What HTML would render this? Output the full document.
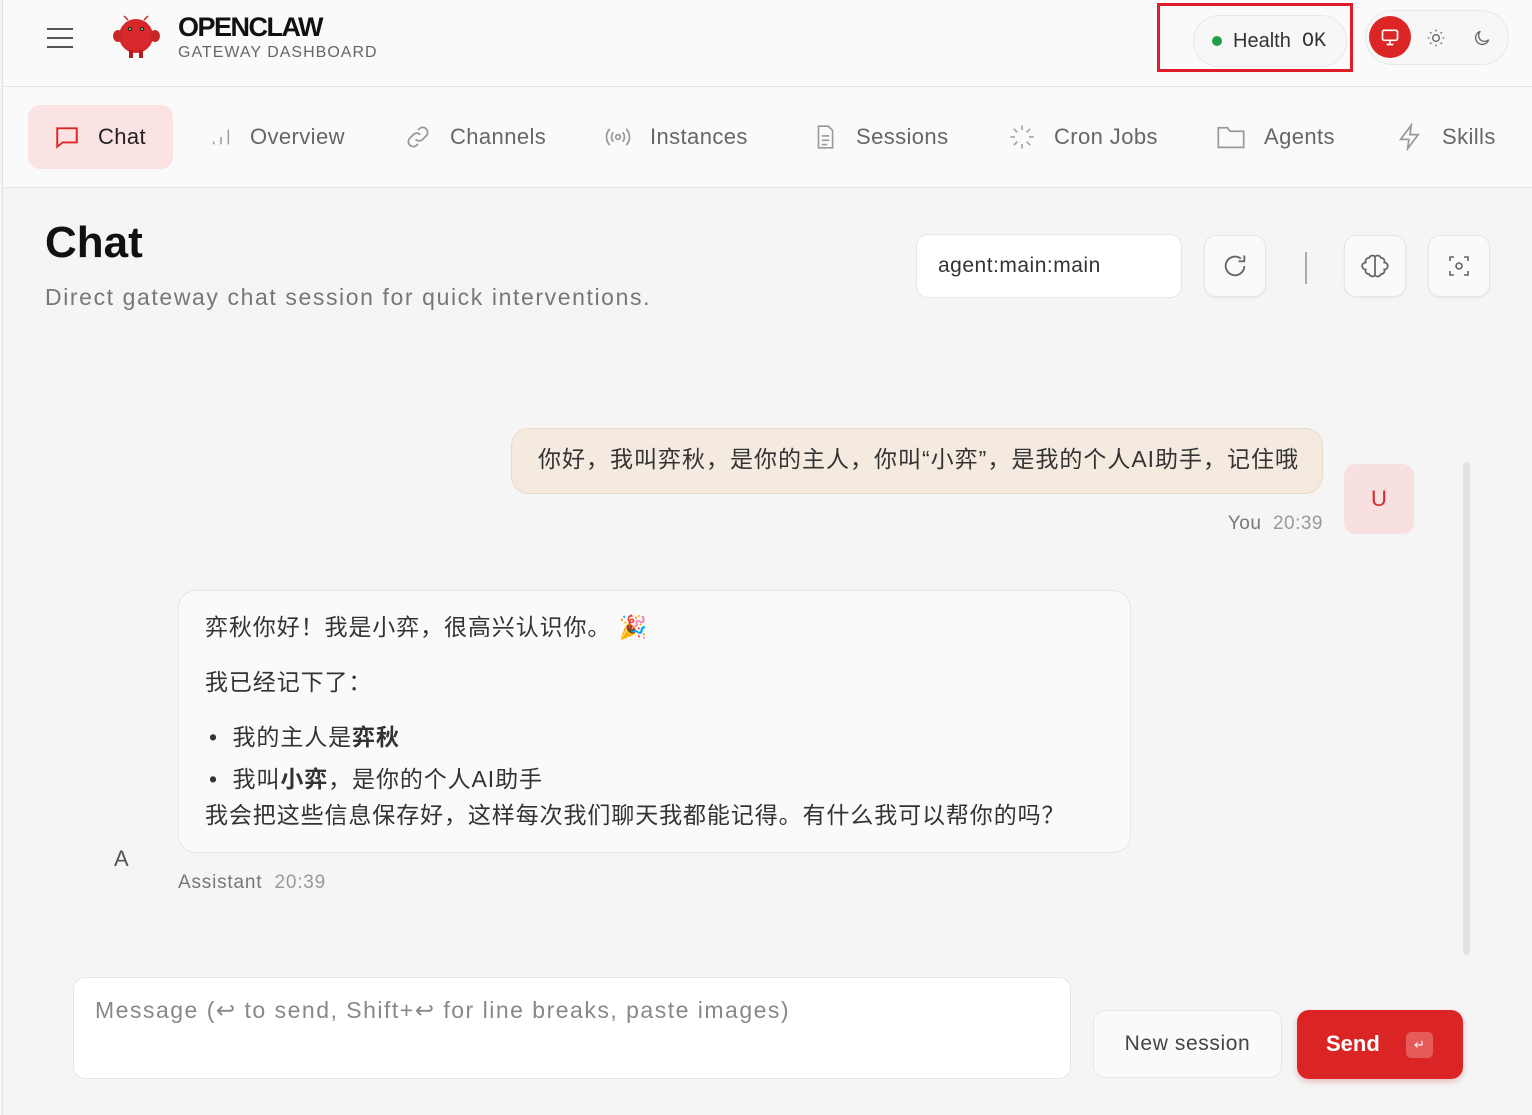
<!DOCTYPE html>
<html><head><meta charset="utf-8"><style>
*{box-sizing:border-box;margin:0;padding:0}
body{width:1532px;height:1115px;overflow:hidden;background:#f5f5f5;font-family:"Liberation Sans","Noto Sans CJK SC",sans-serif;color:#222;position:relative}
.a{position:absolute}
.hdr{left:2px;top:0;width:1530px;height:87px;background:#fafafa;border-bottom:1px solid #e6e6e6}
.nav{left:2px;top:87px;width:1530px;height:101px;background:#fafafa;border-bottom:1px solid #e6e6e6}
.leftline{left:2px;top:0;width:1px;height:1115px;background:#e2e2e2}
.tab{top:105px;height:64px;display:flex;align-items:center;font-size:22px;color:#666;letter-spacing:0.4px}
.tab svg{margin-right:18px}
.ib{background:#fafafa;border:1px solid #e6e6e6;border-radius:12px;width:62px;height:62px;display:flex;align-items:center;justify-content:center;box-shadow:0 1px 2px rgba(0,0,0,.05)}
.cn{font-family:"Liberation Sans","Noto Sans CJK SC",sans-serif}
</style></head><body>
<div class="a hdr"></div>
<div class="a nav"></div>
<div class="a leftline"></div>

<svg class="a" style="left:46px;top:27px" width="28" height="22" viewBox="0 0 28 22"><path d="M1 2h26M1 11h26M1 20h26" stroke="#555" stroke-width="2"/></svg>
<svg class="a" style="left:112px;top:14px" width="50" height="46" viewBox="0 0 50 46"><path d="M16 6l-4-4M32 6l4-4" stroke="#c62828" stroke-width="1.5"/><circle cx="24" cy="22" r="17" fill="#d8282b"/><ellipse cx="6" cy="22" rx="5" ry="6" fill="#c62828"/><ellipse cx="43" cy="22" rx="5" ry="6" fill="#c62828"/><rect x="17" y="36" width="4" height="8" fill="#b71c1c"/><rect x="27" y="36" width="4" height="8" fill="#b71c1c"/><circle cx="18" cy="15" r="2" fill="#222"/><circle cx="30" cy="15" r="2" fill="#222"/><circle cx="18" cy="15" r="1" fill="#6f6"/><circle cx="30" cy="15" r="1" fill="#6f6"/></svg>
<div class="a" style="left:178px;top:12px;font-size:27px;font-weight:bold;color:#111;letter-spacing:-1.5px">OPENCLAW</div>
<div class="a" style="left:178px;top:44px;font-size:16px;color:#666;letter-spacing:1px">GATEWAY DASHBOARD</div>

<div class="a" style="left:1157px;top:3px;width:196px;height:69px;border:3px solid #e01b2a"></div>
<div class="a" style="left:1193px;top:15px;width:154px;height:52px;border:1px solid #e8e8e8;border-radius:26px;background:#f7f7f7;display:flex;align-items:center;padding-left:18px;font-size:20px;color:#333"><span style="width:10px;height:10px;border-radius:50%;background:#1fa14a;margin-right:11px"></span>Health&nbsp;&nbsp;<span style="font-family:'Liberation Mono',monospace">OK</span></div>
<div class="a" style="left:1365px;top:10px;width:144px;height:55px;border:1px solid #e8e8e8;border-radius:28px;background:#f7f7f7"></div>
<div class="a" style="left:1369px;top:16px;width:42px;height:42px;border-radius:50%;background:#dc2626;display:flex;align-items:center;justify-content:center"><svg width="20" height="20" viewBox="0 0 24 24" fill="none" stroke="#fff" stroke-width="2"><rect x="3" y="4" width="18" height="12" rx="2"/><path d="M8 21h8M12 16v5"/></svg></div>
<svg class="a" style="left:1426px;top:28px" width="20" height="20" viewBox="0 0 24 24" fill="none" stroke="#666" stroke-width="1.6"><circle cx="12" cy="12" r="4"/><path d="M12 2v2M12 20v2M2 12h2M20 12h2M5 5l1.5 1.5M17.5 17.5L19 19M5 19l1.5-1.5M17.5 6.5L19 5"/></svg>
<svg class="a" style="left:1472px;top:28px" width="20" height="20" viewBox="0 0 24 24" fill="none" stroke="#666" stroke-width="1.6"><path d="M20 14A8 8 0 1 1 10 4a6 6 0 0 0 10 10z"/></svg>

<div class="a" style="left:28px;top:105px;width:145px;height:64px;background:#fbe3e3;border-radius:12px"></div>
<div class="a tab" style="left:54px;color:#222"><svg width="26" height="26" viewBox="0 0 24 24" fill="none" stroke="#dc2626" stroke-width="1.8"><path d="M3 4h18v13H8l-5 4z"/></svg>Chat</div>
<div class="a tab" style="left:210px"><svg width="22" height="22" viewBox="0 0 24 24" fill="none" stroke="#999" stroke-width="1.6"><path d="M4 20v-3M12 20v-8M20 20V4"/></svg>Overview</div>
<div class="a tab" style="left:404px"><svg width="28" height="28" viewBox="0 0 24 24" fill="none" stroke="#999" stroke-width="1.5"><path d="M10 14a4 4 0 0 0 6 0l3-3a4 4 0 0 0-6-6l-1 1M14 10a4 4 0 0 0-6 0l-3 3a4 4 0 0 0 6 6l1-1"/></svg>Channels</div>
<div class="a tab" style="left:604px"><svg width="28" height="28" viewBox="0 0 24 24" fill="none" stroke="#999" stroke-width="1.5"><circle cx="12" cy="12" r="2"/><path d="M8 8a6 6 0 0 0 0 8M16 8a6 6 0 0 1 0 8M5 5a10 10 0 0 0 0 14M19 5a10 10 0 0 1 0 14"/></svg>Instances</div>
<div class="a tab" style="left:812px"><svg width="26" height="26" viewBox="0 0 24 24" fill="none" stroke="#999" stroke-width="1.5"><path d="M6 2h9l4 4v16H6zM9 11h7M9 15h7M9 19h5"/></svg>Sessions</div>
<div class="a tab" style="left:1008px"><svg width="28" height="28" viewBox="0 0 24 24" fill="none" stroke="#aaa" stroke-width="1.5"><path d="M12 2v4M12 18v4M2 12h4M18 12h4M5 5l3 3M16 16l3 3M5 19l3-3M16 8l3-3"/></svg>Cron Jobs</div>
<div class="a tab" style="left:1216px"><svg width="30" height="28" viewBox="0 0 26 24" fill="none" stroke="#999" stroke-width="1.5"><path d="M2 4h8l2 3h12v14H2z"/></svg>Agents</div>
<div class="a tab" style="left:1396px"><svg width="28" height="28" viewBox="0 0 24 24" fill="none" stroke="#999" stroke-width="1.5"><path d="M13 2L4 14h7l-1 8 9-12h-7z"/></svg>Skills</div>

<div class="a" style="left:45px;top:218px;font-size:44px;font-weight:bold;color:#111">Chat</div>
<div class="a" style="left:45px;top:284px;font-size:23px;color:#777;letter-spacing:1.6px">Direct gateway chat session for quick interventions.</div>

<div class="a" style="left:916px;top:234px;width:266px;height:64px;background:#fff;border:1px solid #e6e6e6;border-radius:12px;padding-left:21px;line-height:62px;font-size:21px;color:#333;letter-spacing:0.5px">agent:main:main</div>
<div class="a ib" style="left:1204px;top:235px"><svg width="28" height="28" viewBox="0 0 24 24" fill="none" stroke="#666" stroke-width="1.6"><path d="M20 12a8 8 0 1 1-3-6.3M20 3v5h-5"/></svg></div>
<div class="a" style="left:1305px;top:252px;width:2px;height:32px;background:#aaa"></div>
<div class="a ib" style="left:1344px;top:235px"><svg width="28" height="28" viewBox="0 0 24 24" fill="none" stroke="#666" stroke-width="1.5"><path d="M12 4a3 3 0 0 0-5 1 3 3 0 0 0-3 4 3 3 0 0 0 0 6 3 3 0 0 0 3 4 3 3 0 0 0 5 1zM12 4a3 3 0 0 1 5 1 3 3 0 0 1 3 4 3 3 0 0 1 0 6 3 3 0 0 1-3 4 3 3 0 0 1-5 1zM12 4v16"/></svg></div>
<div class="a ib" style="left:1428px;top:235px"><svg width="24" height="24" viewBox="0 0 24 24" fill="none" stroke="#666" stroke-width="1.6"><path d="M3 7V3h4M17 3h4v4M21 17v4h-4M7 21H3v-4"/><circle cx="12" cy="12" r="3"/></svg></div>

<div class="a cn" style="left:511px;top:428px;width:812px;height:66px;background:#f4eadf;border:1px solid #ead9c8;border-radius:18px;padding:11px 0 0 26px;font-size:23px;color:#333;white-space:nowrap;letter-spacing:1px">你好，我叫弈秋，是你的主人，你叫“小弈”，是我的个人AI助手，记住哦</div>
<div class="a" style="left:1344px;top:464px;width:70px;height:70px;background:#f8dfe0;border-radius:12px;color:#d42a2a;font-size:22px;text-align:center;line-height:70px">U</div>
<div class="a" style="left:1180px;top:513px;width:143px;text-align:right;font-size:19px;color:#999;letter-spacing:0.5px"><span style="color:#777">You</span>&nbsp;&nbsp;20:39</div>

<div class="a cn" style="left:178px;top:590px;width:953px;height:263px;background:#fafafa;border:1px solid #e6e6e6;border-radius:18px;padding:18px 0 0 26px;font-size:23px;color:#333;line-height:36px;letter-spacing:0.9px">
<div>弈秋你好！我是小弈，很高兴认识你。 🎉</div>
<div style="margin-top:19px">我已经记下了：</div>
<div style="margin-top:19px;padding-left:4px">•&nbsp;&nbsp;我的主人是<b>弈秋</b></div>
<div style="margin-top:6px;padding-left:4px">•&nbsp;&nbsp;我叫<b>小弈</b>，是你的个人AI助手</div>
<div>我会把这些信息保存好，这样每次我们聊天我都能记得。有什么我可以帮你的吗？</div>
</div>
<div class="a" style="left:114px;top:846px;font-size:22px;color:#555">A</div>
<div class="a" style="left:178px;top:872px;font-size:19px;color:#999;letter-spacing:0.8px"><span style="color:#777">Assistant</span>&nbsp;&nbsp;20:39</div>

<div class="a" style="left:1463px;top:462px;width:7px;height:493px;background:#e2e2e2;border-radius:4px"></div>

<div class="a" style="left:73px;top:977px;width:998px;height:102px;background:#fff;border:1px solid #e6e6e6;border-radius:12px;padding:19px 0 0 21px;font-size:23px;color:#888;letter-spacing:1.5px;white-space:nowrap">Message (↩ to send, Shift+↩ for line breaks, paste images)</div>
<div class="a" style="left:1093px;top:1010px;width:189px;height:68px;background:#fafafa;border:1px solid #e6e6e6;border-radius:12px;text-align:center;line-height:66px;font-size:21px;color:#444;letter-spacing:0.6px">New session</div>
<div class="a" style="left:1297px;top:1010px;width:166px;height:69px;background:#db2525;border-radius:12px;box-shadow:0 3px 6px rgba(200,30,30,.25)"></div>
<div class="a" style="left:1326px;top:1031px;font-size:22px;font-weight:bold;color:#fff">Send</div>
<div class="a" style="left:1406px;top:1032px;width:27px;height:26px;background:#e65a5a;border-radius:5px;color:#fff;font-size:13px;text-align:center;line-height:26px">↵</div>
</body></html>
